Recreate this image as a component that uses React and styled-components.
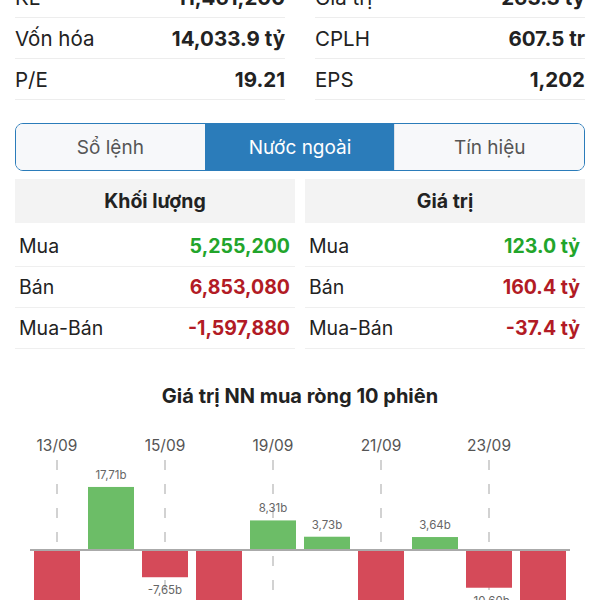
import React, { useState } from "react";
import styled, { createGlobalStyle } from "styled-components";

const Global = createGlobalStyle`
  body {
    margin: 0;
    background: #fff;
    font-family: Inter, "Liberation Sans", Arial, sans-serif;
    color: #222;
    overflow: hidden;
  }
`;

const Page = styled.div`
  width: 600px;
  height: 600px;
  overflow: hidden;
`;

const Section = styled.div`
  padding: 0 15px;
`;

const StatsGrid = styled.div`
  display: grid;
  grid-template-columns: 1fr 1fr;
  column-gap: 30px;
  margin-top: -23px;
`;

const StatRow = styled.div`
  display: flex;
  justify-content: space-between;
  align-items: center;
  height: 40px;
  border-bottom: 1px solid #ededed;
  font-size: 20.5px;

  span:last-child {
    font-weight: 700;
  }
`;

const Tabs = styled.div`
  display: flex;
  margin-top: 23px;
  height: 48px;
  border: 1.5px solid #2b7cba;
  border-radius: 8px;
  overflow: hidden;
  box-sizing: border-box;
`;

const Tab = styled.button`
  flex: 1;
  border: none;
  border-left: 1px solid ${(p) => (p.$active ? "#2b7cba" : "#dde3ea")};
  background: ${(p) => (p.$active ? "#2b7cba" : "#f7f8fa")};
  color: ${(p) => (p.$active ? "#fff" : "#555")};
  font-family: inherit;
  font-size: 19px;
  padding: 0;
  cursor: pointer;

  &:first-child {
    border-left: none;
  }
`;

const Columns = styled.div`
  display: grid;
  grid-template-columns: 1fr 1fr;
  column-gap: 10px;
  margin-top: 8px;
`;

const HeadCell = styled.div`
  height: 44px;
  background: #f3f3f3;
  display: flex;
  align-items: center;
  justify-content: center;
  font-weight: 700;
  font-size: 19.5px;
`;

const Rows = styled.div`
  margin-top: 3px;
`;

const DataRow = styled.div`
  display: flex;
  justify-content: space-between;
  align-items: center;
  height: 40px;
  padding: 0 5px 0 4px;
  border-bottom: 1px solid #efefef;
  font-size: 19.5px;
`;

const Value = styled.span`
  font-weight: 700;
  color: ${(p) => (p.$tone === "up" ? "#22a52b" : "#b21b25")};
`;

const ChartTitle = styled.div`
  margin-top: 35px;
  text-align: center;
  font-weight: 700;
  font-size: 20px;
  color: #222;
`;

const ChartBox = styled.div`
  margin-top: 12px;
  svg {
    display: block;
  }
`;

const stats = [
  ["KL", "11,461,200", "Giá trị", "263.3 tỷ"],
  ["Vốn hóa", "14,033.9 tỷ", "CPLH", "607.5 tr"],
  ["P/E", "19.21", "EPS", "1,202"],
];

const volume = [
  ["Mua", "5,255,200", "up"],
  ["Bán", "6,853,080", "down"],
  ["Mua-Bán", "-1,597,880", "down"],
];

const value = [
  ["Mua", "123.0 tỷ", "up"],
  ["Bán", "160.4 tỷ", "down"],
  ["Mua-Bán", "-37.4 tỷ", "down"],
];

const sessions = [-18.4, 17.71, -7.65, -16.2, 8.31, 3.73, -15.1, 3.64, -10.6, -21.3];
const dates = ["13/09", "15/09", "19/09", "21/09", "23/09"];

const fmt = (v) => v.toFixed(2).replace(".", ",") + "b";

const Chart = () => {
  const base = 130;
  const k = 3.56;
  return (
    <svg width="600" height="200" viewBox="0 0 600 200">
      {dates.map((d, i) => {
        const x = 57 + i * 108;
        return (
          <g key={d}>
            <text x={x} y={31} textAnchor="middle" fontSize="15.5" fill="#555"
              fontFamily="Inter, 'Liberation Sans', sans-serif">{d}</text>
            <line x1={x} x2={x} y1={40} y2={200} stroke="#c4c4c4" strokeWidth="1.5"
              strokeDasharray="10 14" />
          </g>
        );
      })}
      {sessions.map((v, i) => {
        const x = 34 + i * 54;
        const h = Math.abs(v) * k;
        const up = v > 0;
        const y = up ? base - h : base;
        return (
          <g key={i}>
            <rect x={x} y={y} width={46} height={h} fill={up ? "#6cbd67" : "#d54a59"} />
            <text x={x + 23} y={up ? y - 8 : y + h + 17} textAnchor="middle" fontSize="11.5"
              fill="#666" fontFamily="Inter, 'Liberation Sans', sans-serif">{fmt(v)}</text>
          </g>
        );
      })}
      <line x1={30} x2={570} y1={base} y2={base} stroke="#aaa" strokeWidth="2" />
    </svg>
  );
};

export default function App() {
  const [tab, setTab] = useState(1);
  const tabs = ["Sổ lệnh", "Nước ngoài", "Tín hiệu"];
  return (
    <Page>
      <Global />
      <Section>
        <StatsGrid>
          {stats.map((r) => (
            <React.Fragment key={r[0]}>
              <StatRow><span>{r[0]}</span><span>{r[1]}</span></StatRow>
              <StatRow><span>{r[2]}</span><span>{r[3]}</span></StatRow>
            </React.Fragment>
          ))}
        </StatsGrid>
        <Tabs>
          {tabs.map((t, i) => (
            <Tab key={t} $active={i === tab} onClick={() => setTab(i)}>{t}</Tab>
          ))}
        </Tabs>
        <Columns>
          <div>
            <HeadCell>Khối lượng</HeadCell>
            <Rows>
              {volume.map((r) => (
                <DataRow key={r[0]}><span>{r[0]}</span><Value $tone={r[2]}>{r[1]}</Value></DataRow>
              ))}
            </Rows>
          </div>
          <div>
            <HeadCell>Giá trị</HeadCell>
            <Rows>
              {value.map((r) => (
                <DataRow key={r[0]}><span>{r[0]}</span><Value $tone={r[2]}>{r[1]}</Value></DataRow>
              ))}
            </Rows>
          </div>
        </Columns>
      </Section>
      <ChartTitle>Giá trị NN mua ròng 10 phiên</ChartTitle>
      <ChartBox>
        <Chart />
      </ChartBox>
    </Page>
  );
}
